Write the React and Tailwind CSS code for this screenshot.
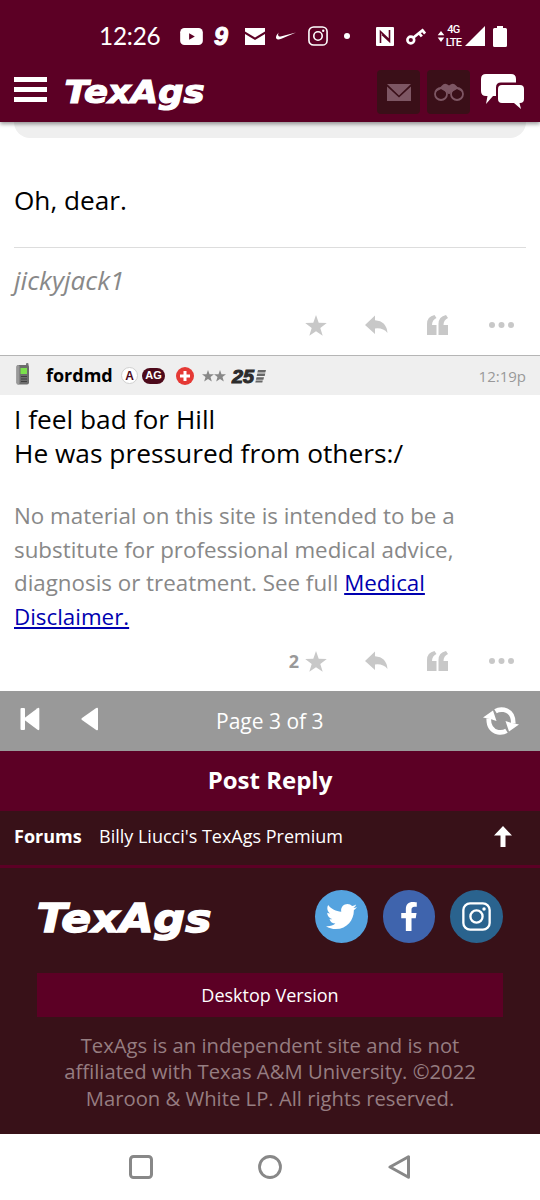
import React from "react";
import { FaTwitter, FaFacebookF } from "react-icons/fa";
import { SiNike } from "react-icons/si";

function Logo({ className }) {
    return (
        <svg viewBox="0 0 146 40" className={className} fill="#fff">
            <text
                x="1.5"
                y="30.5"
                textLength="140"
                lengthAdjust="spacingAndGlyphs"
                fontSize="31.5"
                fontWeight="bold"
                fontStyle="italic"
                stroke="#fff"
                strokeWidth="1.2"
                className="font-['DejaVu_Sans',sans-serif]"
            >
                TexAgs
            </text>
        </svg>
    );
}

function InstagramIcon({ className }) {
    return (
        <svg viewBox="0 0 30 30" className={className} fill="none" stroke="currentColor" strokeWidth="2.4">
            <rect x="1.4" y="1.4" width="27.2" height="27.2" rx="7" />
            <circle cx="15" cy="15" r="6.3" />
            <circle cx="22.8" cy="7.2" r="1.8" fill="currentColor" stroke="none" />
        </svg>
    );
}

function StatusBar() {
    return (
        <div className="flex h-[62px] items-center pt-[10px] pl-[99px] text-white">
            <span className="w-[81px] text-[24.3px] leading-[30px] tracking-[-0.2px] font-['Lato',sans-serif]">12:26</span>
            <svg viewBox="0 0 24 18" className="h-[17px] w-[23px]">
                <rect width="24" height="18" rx="4.5" fill="#fff" />
                <path d="M9.5 5.5v7l6-3.5z" fill="#5c0025" />
            </svg>
            <span className="ml-[11px] w-[19px] text-[25px] leading-[32px] font-bold italic font-['Liberation_Sans',sans-serif] [-webkit-text-stroke:1px_white]">
                9
            </span>
            <svg viewBox="0 0 20 17" className="ml-[12px] h-[17px] w-[20px]">
                <path d="M0 0h20v3.5L10 9.5 0 3.5zM0 6l10 6 10-6v11H0z" fill="#fff" />
            </svg>
            <SiNike className="ml-[11px] h-[20px] w-[20px]" />
            <InstagramIcon className="ml-[12px] h-[20px] w-[20px]" />
            <span className="ml-[16px] h-[6px] w-[6px] rounded-full bg-white" />
            <svg viewBox="0 0 18 19" className="ml-[26px] h-[19px] w-[18px]">
                <rect width="18" height="19" rx="1" fill="#fff" />
                <path d="M4.500 16V4.500L13 12.500M13.500 3v11.500L6 7.500" fill="none" stroke="#5c0025" strokeWidth="1.600" />
            </svg>
            <svg viewBox="0 0 20 18" className="ml-[12px] h-[18px] w-[20px]" fill="none" stroke="#fff">
                <circle cx="4.8" cy="13" r="3.4" strokeWidth="2.6" />
                <path d="M7.500 10.500 17.500 2.500M13 6l2.800 3.500M16.500 3.400l2.600 3.100" strokeWidth="2.800" />
            </svg>
            <svg viewBox="0 0 8 12" className="ml-[11px] h-[11px] w-[8px]" fill="#fff">
                <path d="M4 0l3.600 4.500H.4zM4 12L.4 7.200h7.200z" />
            </svg>
            <div className="w-[17px] text-center text-[11px] leading-[13px] font-medium tracking-[-0.6px] font-['Roboto',sans-serif]">
                <div>4G</div>
                <div>LTE</div>
            </div>
            <svg viewBox="0 0 20 20" className="ml-[3px] h-[20px] w-[20px]" fill="#fff">
                <path d="M20 0v20H0z" />
            </svg>
            <svg viewBox="0 0 14 21" className="ml-[8px] h-[21px] w-[14px]" fill="#fff">
                <path d="M4 0h6v2h2.500q1.500 0 1.500 1.500V19.500q0 1.500-1.500 1.500H1.500Q0 21 0 19.500V3.500Q0 2 1.500 2H4z" />
            </svg>
        </div>
    );
}

function Header() {
    return (
        <div className="relative z-10 h-[122px] bg-[#5c0025] shadow-[0_2px_4px_rgba(0,0,0,0.4)]">
            <StatusBar />
            <div className="flex h-[60px] items-center pl-[14px] text-white">
                <div className="mb-[6px] flex w-[33px] flex-col gap-[5px]">
                    <span className="h-[5px] bg-white" />
                    <span className="h-[5px] bg-white" />
                    <span className="h-[5px] bg-white" />
                </div>
                <Logo className="ml-[16px] h-[40px] w-[146px]" />
                <div className="ml-[168px] flex h-[44px] w-[43px] items-center justify-center rounded-[4px] bg-[#3a0f18]">
                    <svg viewBox="0 0 24 17" className="h-[17px] w-[24px]" fill="#7d5663">
                        <path d="M0 0h24L12 11.500zM0 2.500l12 11 12-11V17H0z" />
                    </svg>
                </div>
                <div className="ml-[7px] flex h-[44px] w-[43px] items-center justify-center rounded-[4px] bg-[#3a0f18]">
                    <svg viewBox="0 0 30 18" className="h-[18px] w-[30px]" fill="none" stroke="#7d5663" strokeWidth="1.800">
                        <path d="M1.500 9 8 2.500Q10 0 13 1.200L15 2.500 17 1.200Q20 0 22 2.500L28.500 9 23 6 17 9.500 15.500 11h-1L13 9.500 7 6z" fill="#7d5663" stroke="none" />
                        <circle cx="7" cy="11" r="6" />
                        <circle cx="23" cy="11" r="6" />
                    </svg>
                </div>
                <svg viewBox="0 0 43 35" className="mb-[2px] ml-[11px] h-[35px] w-[43px]" fill="#fff">
                    <path d="M5 0h25q5 0 5 5v3.500H20q-5 0-5 5V22h-3l-7 8 1.500-8H5q-5 0-5-5V5q0-5 5-5z" />
                    <path d="M21 11h18q4 0 4 4v10q0 4-4 4h-.500l1.500 6-7-6H21q-4 0-4-4V15q0-4 4-4z" />
                </svg>
            </div>
        </div>
    );
}

function PostActions({ stars }) {
    return (
        <div className="flex h-[24px] items-center justify-end pr-[26px] text-[#c8c8c8]">
            {stars && <span className="mr-[6px] text-[18px] leading-[24px] font-bold text-[#999]">{stars}</span>}
            <svg viewBox="0 0 22 21" className="h-[21px] w-[22px]" fill="currentColor">
                <path d="M11 0l2.700 7.700 8.100.2-6.500 5 2.400 7.900L11 16.200l-6.700 4.600 2.400-7.900-6.500-5 8.100-.2z" />
            </svg>
            <svg viewBox="0 0 23 20" className="ml-[38px] h-[20px] w-[23px]" fill="currentColor">
                <path d="M0 10 10 .5v4.700Q21.500 6 22.500 18 18 12.500 10 13.500v5.500z" />
            </svg>
            <svg viewBox="0 0 22 20" className="mb-px ml-[39px] h-[20px] w-[22px]" fill="currentColor">
                <path d="M0 20V9Q0 1.500 7.500 0L9.500 3Q5 5 5 10h4.500v10zM11.500 20V9q0-7.500 7.500-9l2 3q-4.500 2-4.500 7H21v10z" />
            </svg>
            <svg viewBox="0 0 25 6" className="ml-[40px] h-[6px] w-[25px]" fill="currentColor">
                <circle cx="3" cy="3" r="3" />
                <circle cx="12.500" cy="3" r="3" />
                <circle cx="22" cy="3" r="3" />
            </svg>
        </div>
    );
}

function UserBar() {
    return (
        <div className="flex h-[40px] items-center border-t border-[#b5b5b5] bg-[#efefef] pl-[16px]">
            <svg viewBox="0 0 14 22" className="mb-[3px] h-[22px] w-[14px]">
                <rect x="10" y="0" width="2.500" height="6" rx="1" fill="#777" />
                <rect x="0.500" y="2" width="12.500" height="19.500" rx="2" fill="#6d6d6d" />
                <rect x="0.500" y="2" width="3" height="19.500" rx="1.500" fill="#999" />
                <rect x="4.500" y="5" width="6.500" height="6" fill="#7be04c" />
                <path d="M5 13.500h6M5 16h6M5 18.500h6" stroke="#3f3f3f" strokeWidth="1.200" />
            </svg>
            <span className="mb-[2px] ml-[16px] w-[75px] text-[18px] leading-[24px] font-bold text-black">fordmd</span>
            <span className="flex h-[17px] w-[17px] items-center justify-center rounded-full border border-[#d0d0d0] bg-white text-[12px] font-bold text-[#4d0a1b] font-['Liberation_Sans',sans-serif]">
                A
            </span>
            <span className="ml-[4px] flex h-[16px] w-[23px] items-center justify-center rounded-full bg-[#4d0a1b] text-[11px] font-bold text-white font-['Liberation_Sans',sans-serif]">
                AG
            </span>
            <svg viewBox="0 0 18 18" className="ml-[11px] h-[18px] w-[18px]">
                <circle cx="9" cy="9" r="9" fill="#e53935" />
                <path d="M9 4v10M4 9h10" stroke="#fff" strokeWidth="3" />
            </svg>
            <svg viewBox="0 0 24 12" className="ml-[8px] h-[12px] w-[24px]" fill="#888">
                <path d="M6 0l1.500 4.300H12L8.500 7l1.300 4.500L6 9 2.200 11.500 3.500 7 0 4.300h4.500zM18 0l1.500 4.300H24L20.500 7l1.300 4.500L18 9l-3.800 2.500L15.500 7 12 4.300h4.500z" />
            </svg>
            <svg viewBox="0 0 36 24" className="ml-[5px] h-[24px] w-[36px]" fill="#2c2c2c">
                <text
                    x="1"
                    y="18.500"
                    textLength="22"
                    lengthAdjust="spacingAndGlyphs"
                    fontSize="18"
                    fontWeight="bold"
                    fontStyle="italic"
                    stroke="#2c2c2c"
                    strokeWidth="1"
                    className="font-['Liberation_Sans',sans-serif]"
                >
                    25
                </text>
                <path d="M27 6h8l-.7 2.500h-8zM26.300 9.600h8l-.6 2.500h-8zM25.500 13.200h7.500l-.6 2.500h-7.500zM24.800 16.500h7l-.5 2h-7z" fill="#666" />
            </svg>
            <span className="ml-auto pr-[14px] text-[15px] leading-[20px] text-[#999]">12:19p</span>
        </div>
    );
}

function Pager() {
    return (
        <div className="flex h-[60px] items-center bg-[#999] text-white">
            <svg viewBox="0 0 20 24" className="mb-[4px] ml-[20px] h-[24px] w-[20px]" fill="currentColor">
                <rect x="0.500" y="1" width="4.500" height="22" rx="1" />
                <path d="M4.500 11 17.500 1.200q1.800-1 1.800.8v20q0 1.800-1.800.8L4.500 13q-1.200-1 0-2z" />
            </svg>
            <svg viewBox="0 0 18 24" className="mb-[4px] ml-[41px] h-[24px] w-[18px]" fill="currentColor">
                <path d="M1 11 15.200 1q1.800-1 1.800.8v20.400q0 1.800-1.800.8L1 13q-1.200-1 0-2z" />
            </svg>
            <span className="ml-[117px] w-[109px] text-[21px] leading-[28px] whitespace-nowrap">Page 3 of 3</span>
            <svg viewBox="0 0 36 28" className="mr-[21px] ml-auto h-[28px] w-[36px]">
                <path d="M12.500 4.200Q16 2 21 2.800Q30.500 5 30.300 16.500M23.500 23.800Q20 26 15 25.200Q5.500 23 5.700 11.500" fill="none" stroke="#fff" strokeWidth="4.600" />
                <path d="M0 10.500 10 3.500l3.500 10.500-4.500-1.500zM36 17.500l-10 7-3.500-10.500 4.500 1.500z" fill="#fff" />
            </svg>
        </div>
    );
}

function Footer() {
    return (
        <div className="h-[266px] bg-[#381118] px-[37px]">
            <div className="flex h-[75px] items-center pt-[22px] text-white">
                <Logo className="mt-[5px] -ml-[2px] h-[50px] w-[182px]" />
                <div className="ml-auto flex gap-[15px]">
                    <div className="flex h-[53px] w-[53px] items-center justify-center rounded-full bg-[#55a3df]">
                        <FaTwitter className="h-[31px] w-[31px]" />
                    </div>
                    <div className="flex h-[53px] w-[52px] items-center justify-center rounded-full bg-[#3f64ad]">
                        <FaFacebookF className="h-[29px] w-[26px]" />
                    </div>
                    <div className="flex h-[53px] w-[53px] items-center justify-center rounded-full bg-[#2a638e]">
                        <InstagramIcon className="h-[29px] w-[29px]" />
                    </div>
                </div>
            </div>
            <div className="mt-[30px] flex h-[44px] items-center justify-center bg-[#5c0025] text-[18px] text-white">
                Desktop Version
            </div>
            <p className="-mx-[10px] mt-[15px] text-center text-[20.25px] leading-[26.3px] whitespace-nowrap text-[#967d81]">
                TexAgs is an independent site and is not
                <br />
                affiliated with Texas A&amp;M University. ©2022
                <br />
                Maroon &amp; White LP. All rights reserved.
            </p>
        </div>
    );
}

function NavBar() {
    return (
        <div className="flex h-[66px] items-center justify-between bg-white px-[129px] text-[#888]">
            <svg viewBox="0 0 24 24" className="h-[24px] w-[24px]" fill="none" stroke="currentColor" strokeWidth="3">
                <rect x="1.500" y="1.500" width="21" height="21" rx="3" />
            </svg>
            <svg viewBox="0 0 24 24" className="h-[24px] w-[24px]" fill="none" stroke="currentColor" strokeWidth="2.800">
                <circle cx="12" cy="12" r="10.500" />
            </svg>
            <svg viewBox="0 0 24 24" className="h-[24px] w-[24px]" fill="none" stroke="currentColor" strokeWidth="3" strokeLinejoin="round">
                <path d="M3 12 21.500 1.800v20.400z" />
            </svg>
        </div>
    );
}

export default function App() {
    return (
        <div className="h-[1200px] w-[540px] overflow-hidden bg-white font-['Open_Sans',sans-serif]">
            <Header />
            <div className="mx-[14px] h-[16px] rounded-b-[16px] bg-[#efefef]" />
            <div className="h-[217px] px-[14px] pt-[45px]">
                <p className="text-[26.2px] leading-[34px] text-black">Oh, dear.</p>
                <div className="mt-[30px] border-t border-[#ddd]" />
                <p className="mt-[15px] text-[26.2px] leading-[34px] text-[#888] italic">jickyjack1</p>
                <div className="-mx-[14px] mt-[16px]">
                    <PostActions />
                </div>
            </div>
            <UserBar />
            <div className="h-[296px] pt-[8px]">
                <p className="px-[14px] text-[26.3px] leading-[33.5px] text-black">
                    I feel bad for Hill
                    <br />
                    He was pressured from others:/
                </p>
                <p className="mt-[29px] px-[14px] text-[22.35px] leading-[33.6px] whitespace-nowrap text-[#888]">
                    No material on this site is intended to be a
                    <br />
                    substitute for professional medical advice,
                    <br />
                    diagnosis or treatment. See full <span className="text-[#0000b0] underline">Medical</span>
                    <br />
                    <span className="text-[#0000b0] underline">Disclaimer.</span>
                </p>
                <div className="mt-[16px]">
                    <PostActions stars="2" />
                </div>
            </div>
            <Pager />
            <div className="flex h-[60px] items-center justify-center bg-[#5c0025] pb-[2px] text-[24px] font-bold text-white">
                Post Reply
            </div>
            <div className="flex h-[57px] items-center border-b-[3px] border-[#5c0025] bg-[#381118] pb-[3px] pl-[14px] text-[18px] text-white">
                <span className="w-[85px] font-bold">Forums</span>
                <span>Billy Liucci's TexAgs Premium</span>
                <svg viewBox="0 0 18 21" className="mr-[28px] ml-auto h-[21px] w-[18px]" fill="currentColor">
                    <path d="M9 0l9 9.500h-6.500V21h-5V9.500H0z" />
                </svg>
            </div>
            <Footer />
            <NavBar />
        </div>
    );
}
